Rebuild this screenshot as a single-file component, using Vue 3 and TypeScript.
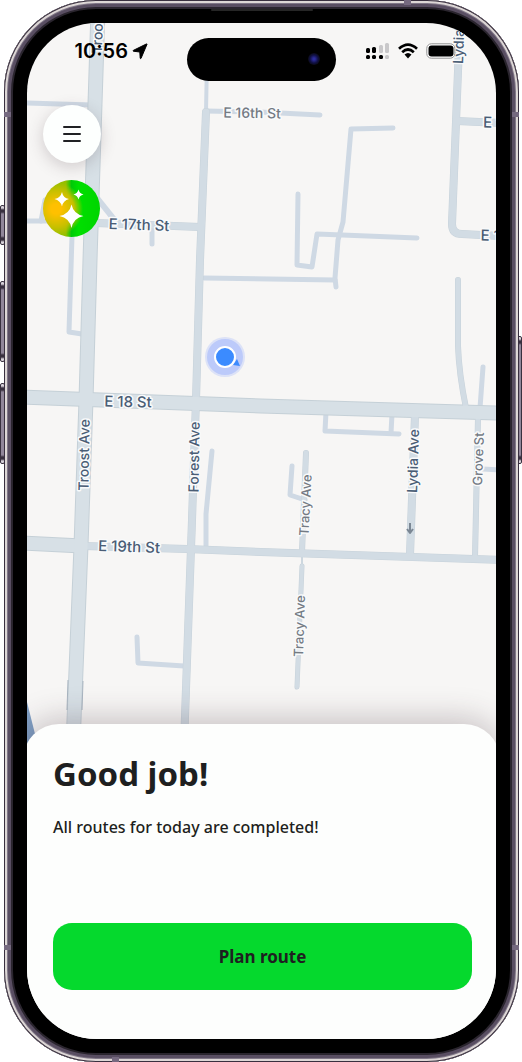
<script setup lang="ts">
interface Road {
  d: string
  w: number
}

interface Label {
  text: string
  x: number
  y: number
  angle: number
  size: number
  minor?: boolean
}

const lanes: Road[] = [
  { d: 'M27 103 L92 105', w: 5 },
  { d: 'M27 221 H60', w: 5 },
  { d: 'M41 221 L45 200', w: 5 },
  { d: 'M97 198 L117 223', w: 6 },
  { d: 'M72 236 L69 332 L82 334', w: 5 },
  { d: 'M152 228 V244', w: 5 },
  { d: 'M207 60 L206 112', w: 4 },
  { d: 'M206 111 L260 112 L320 115', w: 5 },
  { d: 'M393 128 L351 129 L343 222 L338 240 L335 278 L336 287', w: 5 },
  { d: 'M298 194 L297 265 L312 267 L317 234 L417 238', w: 5 },
  { d: 'M204 278 L335 280', w: 5 },
  { d: 'M483 367 L480 408', w: 5 },
  { d: 'M483 469 L500 470', w: 5 },
  { d: 'M326 412 L325 431 L399 434', w: 5 },
  { d: 'M392 414 L391 433', w: 5 },
  { d: 'M292 466 L290 495 L305 500', w: 5 },
  { d: 'M212 451 L206 514 V548', w: 5 },
  { d: 'M137 637 L138 663 L184 666', w: 5 },
]

const streets: Road[] = [
  { d: 'M206 112 L200 260 L196 400 L192 520 L184 745', w: 8 },
  { d: 'M96 223 L200 227', w: 8 },
  { d: 'M460 20 L452 224 Q452 234 462 234 L500 236', w: 8 },
  { d: 'M457 121 L500 123', w: 8 },
  { d: 'M458 280 V346 Q459 374 466 408', w: 6 },
  { d: 'M478 418 L475 557', w: 6 },
  { d: 'M415 415 L410 555', w: 8 },
  { d: 'M306 453 L302 552', w: 6 },
  { d: 'M302 552 V568', w: 2 },
  { d: 'M302 566 L297 687', w: 5 },
  { d: 'M84 546 L187 549 L261 552 L500 560', w: 8 },
]

const avenues: Road[] = [
  { d: 'M20 543 L82 546', w: 14 },
  { d: 'M20 397 L261 406 L500 413', w: 14 },
  { d: 'M98 10 L90 260 L86 400 L81 546 L73 745', w: 14 },
]

const labels: Label[] = [
  { text: 'Troost Ave', x: 98, y: 18, angle: -88, size: 14 },
  { text: 'Lydia Ave', x: 459, y: 32, angle: -88, size: 14 },
  { text: 'E 16th St', x: 252, y: 113, angle: 1, size: 14, minor: true },
  { text: 'E 17th St', x: 139, y: 225, angle: 2, size: 15 },
  { text: 'E 16th St', x: 514, y: 123, angle: 1, size: 15 },
  { text: 'E 17th St', x: 511, y: 236, angle: 1, size: 15 },
  { text: 'E 18 St', x: 128, y: 402, angle: 1, size: 15 },
  { text: 'E 19th St', x: 129, y: 547, angle: 2, size: 15 },
  { text: 'Troost Ave', x: 84, y: 455, angle: -89, size: 14 },
  { text: 'Forest Ave', x: 194, y: 457, angle: -89, size: 14 },
  { text: 'Lydia Ave', x: 413, y: 461, angle: -88, size: 14 },
  { text: 'Grove St', x: 478, y: 459, angle: -88, size: 13, minor: true },
  { text: 'Tracy Ave', x: 305, y: 505, angle: -87, size: 13, minor: true },
  { text: 'Tracy Ave', x: 299, y: 626, angle: -88, size: 13, minor: true },
]
</script>

<template>
  <div class="stage">
    <i class="key key-action"></i>
    <i class="key key-up"></i>
    <i class="key key-down"></i>
    <i class="key key-power"></i>
    <div class="phone">
      <i class="speaker"></i>
      <i class="band band-tr"></i>
      <i class="band band-bl"></i>
      <i class="band band-lt"></i>
      <i class="band band-lb"></i>
      <i class="band band-rt"></i>
      <i class="band band-rb"></i>
      <main class="screen">
        <svg class="map" viewBox="27 23 469 722" preserveAspectRatio="xMidYMin slice" role="img" aria-label="Street map">
          <g fill="none" stroke-linejoin="round">
            <g stroke="#cfd9e4" stroke-linecap="round">
              <path v-for="r in lanes" :key="r.d" :d="r.d" :stroke-width="r.w" />
            </g>
            <g stroke="#c7d2da" stroke-linecap="round">
              <path v-for="r in streets" :key="r.d" :d="r.d" :stroke-width="r.w" />
            </g>
            <g stroke="#c5d0d7">
              <path v-for="r in avenues" :key="r.d" :d="r.d" :stroke-width="r.w + 1" />
            </g>
            <g stroke="#d2dce4" stroke-linecap="round">
              <path v-for="r in streets" :key="r.d" :d="r.d" :stroke-width="r.w - 1" />
            </g>
            <g stroke="#d7e0e6">
              <path v-for="r in avenues" :key="r.d" :d="r.d" :stroke-width="r.w - 1" />
            </g>
            <path d="M68 680 L67 710 M83 681 L82 710" stroke="#a9b5c1" />
            <path d="M410 523 V532 M407 529 L410 533 L413 529" stroke="#7b8794" stroke-width="2" />
          </g>
          <path d="M27 702 L36 738 V750 H27 Z" fill="#7f9fc4" />
          <text
            v-for="(l, i) in labels"
            :key="i"
            :class="['road-label', { minor: l.minor }]"
            :font-size="l.size"
            :transform="`translate(${l.x} ${l.y}) rotate(${l.angle})`"
            text-anchor="middle"
            dy="5"
          >{{ l.text }}</text>
          <circle cx="225" cy="357" r="20" fill="#c1cdfa" opacity=".5" />
          <circle cx="225" cy="357" r="18" fill="#bccafa" />
          <path d="M237 359 L240 366 L233 365 Z" fill="#3d8bfd" />
          <circle cx="225" cy="357" r="10" fill="#3b8bff" stroke="#fff" stroke-width="2" />
        </svg>

        <header class="status">
          <div class="clock">
            <time>10:56</time>
            <svg width="16" height="17" viewBox="0 0 16 17" aria-hidden="true">
              <path d="M15 1.300 L9 15.400 Q8.500 16 8.200 15.200 L7.800 9 L1.400 8.200 Q.5 7.900 1.300 7.400 L14.300 1 Q15.200 .7 15 1.300Z" fill="#000" stroke="#000" stroke-linejoin="round" />
            </svg>
          </div>
          <div class="island"><i class="lens"></i></div>
          <div class="signals">
            <svg width="24" height="18" viewBox="0 0 24 18" aria-label="Signal">
              <g fill="#000">
                <rect x="0" y="6" width="4" height="5" rx="1.5" /><rect x="6" y="5" width="4" height="6" rx="1.5" />
                <rect x="0" y="13" width="4" height="4" rx="1.5" /><rect x="6" y="13" width="4" height="4" rx="1.5" />
                <rect x="13" y="13" width="4" height="4" rx="1.5" />
              </g>
              <g fill="#c9c8ca">
                <rect x="13" y="3" width="4" height="8" rx="1.5" /><rect x="19" y="1" width="4" height="10" rx="1.5" />
                <rect x="19" y="13" width="4" height="4" rx="1.5" />
              </g>
            </svg>
            <svg width="20" height="16" viewBox="0 0 20 16" aria-label="Wi-Fi">
              <g fill="none" stroke="#000" stroke-width="2.7">
                <path d="M1 5.8 Q10 -2.6 19 5.8" />
                <path d="M4.2 9.2 Q10 3.8 15.8 9.2" />
              </g>
              <path d="M6.5 11.6 Q10 8.5 13.5 11.6 L10 15.4Z" fill="#000" />
            </svg>
            <svg width="30" height="16" viewBox="0 0 30 16" aria-label="Battery">
              <rect x=".8" y=".8" width="28" height="14.4" rx="4.5" fill="#fff" stroke="#929292" />
              <rect x="2.5" y="2.4" width="25" height="11.2" rx="3" fill="#000" />
            </svg>
          </div>
        </header>

        <nav class="tools">
          <button class="round menu" type="button" aria-label="Menu">
            <svg width="18" height="18" viewBox="0 0 18 18" aria-hidden="true">
              <path d="M1 2 H17 M1 9 H17 M1 16 H17" stroke="#202124" stroke-width="2" stroke-linecap="round" />
            </svg>
          </button>
          <button class="round magic" type="button" aria-label="Assistant">
            <svg width="57" height="57" viewBox="0 0 57 57" aria-hidden="true">
              <g fill="#fff">
                <path d="M28.500 24.500 Q30.500 34 40.500 36 Q30.500 38 28.500 48 Q26.500 38 16.500 36 Q26.500 34 28.500 24.500Z" />
                <path d="M19 12 Q20 18 26 19 Q20 20.500 19 26.500 Q17.500 20.500 11.500 19 Q17.500 18 19 12Z" />
                <path d="M35.500 9.500 Q36.300 13.500 40.500 14.500 Q36.300 15.500 35.500 19.500 Q34.500 15.500 30.500 14.500 Q34.500 13.500 35.500 9.500Z" />
              </g>
            </svg>
          </button>
        </nav>

        <section class="sheet">
          <h1>Good job!</h1>
          <p>All routes for today are completed!</p>
          <button class="plan" type="button">Plan route</button>
        </section>
      </main>
    </div>
  </div>
</template>

<style>
body {
  margin: 0;
  background: #fff;
}
</style>

<style scoped>
.stage {
  position: relative;
  display: flex;
  min-height: 100vh;
  padding: 0 3px 0 4px;
  box-sizing: border-box;
}

.phone {
  position: relative;
  display: flex;
  flex: 1;
  padding: 23px;
  border-radius: 92px;
  background: #000;
  box-shadow:
    inset 0 0 0 1px #39303f,
    inset 0 0 0 3px #ddd7d6,
    inset 0 0 0 4px #807787,
    inset 0 0 0 7px #594e62,
    inset 0 0 0 9px #2a252e;
}

.key {
  position: absolute;
  width: 5px;
  box-sizing: border-box;
  border: 1px solid #39303f;
  border-radius: 2px;
  background: linear-gradient(#d8d2da 0 2px, #39303f 4px 6px, #91869a 8px calc(100% - 8px), #39303f calc(100% - 6px) calc(100% - 4px), #d8d2da calc(100% - 2px));
}

.key-action { left: 0; top: 205px; height: 40px; }
.key-up { left: 0; top: 281px; height: 81px; }
.key-down { left: 0; top: 383px; height: 81px; }
.key-power { right: 0; top: 336px; height: 128px; }

.speaker {
  position: absolute;
  top: 9px;
  left: 50%;
  width: 102px;
  height: 2px;
  margin-left: -51px;
  border-radius: 2px;
  background: #262626;
}

.band {
  position: absolute;
  width: 7px;
  height: 5px;
  background: #75697f;
}

.band-tr { right: 108px; top: 0; }
.band-bl { left: 108px; bottom: 0; }
.band-lt { left: 0; top: 112px; }
.band-lb { left: 0; bottom: 112px; }
.band-rt { right: 0; top: 112px; }
.band-rb { right: 0; bottom: 112px; }

.screen {
  position: relative;
  display: flex;
  flex: 1;
  flex-direction: column;
  overflow: hidden;
  border-radius: 70px;
  background: #f7f6f5;
  font-family: "Noto Sans", sans-serif;
  color: #1e1f20;
}

.map {
  position: absolute;
  top: 0;
  left: 0;
  width: 100%;
  height: 722px;
}

.road-label {
  font-family: Inter, sans-serif;
  font-weight: 500;
  fill: #4a5d75;
  stroke: #f9fafb;
  stroke-width: 3px;
  stroke-linejoin: round;
  paint-order: stroke;
}

.road-label.minor {
  fill: #747b84;
}

.status {
  position: relative;
  display: grid;
  grid-template-columns: 1fr 149px 1fr;
  align-items: center;
  padding-top: 14px;
}

.clock {
  display: flex;
  align-items: center;
  justify-content: flex-end;
  gap: 4px;
  padding: 0 39px 16px 0;
  font: 600 20px/28px Inter, sans-serif;
  color: #000;
}

.island {
  display: flex;
  align-items: center;
  justify-content: flex-end;
  height: 43px;
  padding-right: 16px;
  box-sizing: border-box;
  border-radius: 22px;
  background: #000;
}

.lens {
  width: 12px;
  height: 12px;
  border-radius: 50%;
  background: radial-gradient(circle, #2c2c9c 0 1px, #101044 4px, #0b0b18 6px);
}

.signals {
  display: flex;
  align-items: center;
  gap: 8px;
  padding: 0 0 16px 30px;
}

.tools {
  position: relative;
  display: flex;
  flex-direction: column;
  align-items: flex-start;
  gap: 17px;
  padding: 24px 16px;
}

.round {
  display: grid;
  place-items: center;
  width: 58px;
  height: 58px;
  padding: 0;
  border: 0;
  border-radius: 50%;
  cursor: pointer;
}

.menu {
  background: #fdfffe;
  box-shadow: 0 4px 16px rgba(70, 50, 60, 0.22);
}

.magic {
  width: 57px;
  height: 57px;
  background: radial-gradient(circle at 13px 29px, #ffc000 0 5px, #c8c000 18px, transparent 27px), linear-gradient(90deg, #96bf00 0 40%, #00c908 50%, #00df00 62%, #00d500);
}

.sheet {
  position: relative;
  display: flex;
  flex-direction: column;
  margin: auto -4px 0;
  padding: 28px 28px 49px 30px;
  border-radius: 36px 36px 0 0;
  background: #fdfefd;
  box-shadow: 0 -4px 32px rgba(60, 40, 50, 0.28);
}

h1 {
  margin: 0;
  font-size: 33px;
  font-weight: 700;
  line-height: 44px;
}

p {
  margin: 19px 0 84px;
  font-size: 16px;
  font-weight: 500;
  line-height: 24px;
}

.plan {
  height: 67px;
  border: 0;
  border-radius: 19px;
  background: #05d92d;
  font: 700 17px/24px "Noto Sans", sans-serif;
  color: #1e1f20;
  cursor: pointer;
}
</style>
